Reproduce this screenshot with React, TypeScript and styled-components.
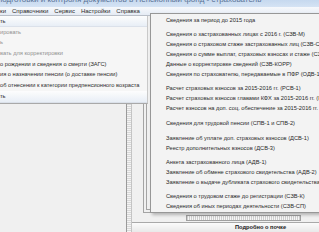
import * as React from "react"
import styled, { createGlobalStyle } from "styled-components"

const GlobalStyle = createGlobalStyle`
    html, body {
        margin: 0;
        padding: 0;
        background: #f0f0f0;
    }
    body {
        font-family: "Liberation Sans", "DejaVu Sans", sans-serif;
    }
`

const Screen = styled.div`
    position: relative;
    width: 319px;
    height: 232px;
    overflow: hidden;
    background: #f0f0f0;
    font-size: 5.7px;
    color: #2a2a2a;
    display: flex;
    flex-direction: column;
`

const TitleBar = styled.div`
    height: 7px;
    flex: none;
    overflow: hidden;
    background: linear-gradient(#c6d9ef, #d5e3f4);
    white-space: nowrap;
`

const TitleText = styled.div`
    margin-top: -5px;
    margin-left: -2px;
    font-size: 8px;
    line-height: 10px;
    color: #5b7396;
`

const MenuBar = styled.div`
    height: 8px;
    flex: none;
    display: flex;
    align-items: center;
    background: linear-gradient(#f7f9fc, #e5ebf4);
    border-bottom: 1px solid #b9bfc8;
    font-size: 6px;
`

const MenuItem = styled.span`
    padding: 0 3px;
    line-height: 8px;
    color: #2b2b2b;
    &:first-child {
        padding-left: 0;
    }
`

const Body = styled.div`
    flex: 1;
    display: flex;
    flex-direction: column;
`

const Panel = styled.div`
    width: 148px;
    height: 88px;
    flex: none;
    background: #f6f6f6;
    border-bottom: 1px solid #a9a9a9;
    border-right: 1px solid #c9c9c9;
    box-sizing: border-box;
    display: flex;
    flex-direction: column;
`

const PanelHeader = styled.div<{ $h?: number }>`
    height: ${p => p.$h ?? 10}px;
    line-height: ${p => p.$h ?? 10}px;
    background: linear-gradient(#fdfdfd, #e8eef6);
    border-bottom: 1px solid #dbe1ea;
    white-space: nowrap;
    overflow: hidden;
`

const PanelRow = styled.div<{ $disabled?: boolean; $h?: number }>`
    height: ${p => p.$h ?? 11}px;
    line-height: ${p => p.$h ?? 11}px;
    color: ${p => (p.$disabled ? "#909090" : "#2c2c2c")};
    white-space: nowrap;
    overflow: hidden;
`

const Lower = styled.div`
    flex: 1;
    display: flex;
`

const Blank = styled.div`
    width: 126px;
    flex: none;
`

const Splitter = styled.div`
    width: 4px;
    flex: none;
    border-left: 1px solid #9a9a9a;
    border-right: 1px solid #c4c4c4;
    background: repeating-linear-gradient(#d8d8d8 0 1px, #f4f4f4 1px 2px);
`

const RightPane = styled.div`
    flex: 1;
    display: flex;
    flex-direction: column;
`

const Frame = styled.div`
    flex: 1;
    margin-left: 11px;
    border-left: 4px double #a4a4a4;
    border-bottom: 4px double #a4a4a4;
`

const ScrollRow = styled.div`
    height: 9px;
    flex: none;
    display: flex;
    align-items: center;
    padding-left: 54px;
`

const ScrollTrack = styled.div`
    width: 113px;
    height: 4px;
    border: 1px solid #a0a0a0;
    background: repeating-linear-gradient(90deg, #cfcfcf 0 1px, #f7f7f7 1px 2px);
`

const DetailHeader = styled.div`
    height: 9px;
    flex: none;
    border-top: 1px solid #a9a9a9;
    background: linear-gradient(#fbfbfb, #e9e9e9);
    text-align: center;
    font-weight: bold;
    line-height: 9px;
    padding-left: 70px;
    color: #1a1a1a;
`

const Popup = styled.div`
    position: absolute;
    left: 150px;
    top: 13px;
    width: 190px;
    padding: 1px 0;
    background: #f3f3f3;
    border: 1px solid #979797;
    box-shadow: 2px 2px 3px rgba(0, 0, 0, 0.25);
    display: flex;
    flex-direction: column;
`

const PopupItem = styled.div`
    height: 10px;
    line-height: 10px;
    padding-left: 15px;
    white-space: nowrap;
    color: #2a2a2a;
`

const PopupSeparator = styled.div<{ $h?: number }>`
    height: ${p => p.$h ?? 4}px;
`

type Entry = { text: string } | { sep: number }

const popupEntries: Entry[] = [
    { text: "Сведения за период до 2015 года" },
    { sep: 4 },
    { text: "Сведения о застрахованных лицах с 2016 г. (СЗВ-М)" },
    { text: "Сведения о страховом стаже застрахованных лиц (СЗВ-СТАЖ)" },
    { text: "Сведения о сумме выплат, страховых взносах и стаже (СЗВ-6-4)" },
    { text: "Данные о корректировке сведений (СЗВ-КОРР)" },
    { text: "Сведения по страхователю, передаваемые в ПФР (ОДВ-1)" },
    { sep: 4 },
    { text: "Расчет страховых взносов за 2015-2016 гг. (РСВ-1)" },
    { text: "Расчет страховых взносов главами КФХ за 2015-2016 гг. (РСВ-2)" },
    { text: "Расчет взносов на доп. соц. обеспечение за 2015-2016 гг. (РСВ-3)" },
    { sep: 5 },
    { text: "Сведения для трудовой пенсии (СПВ-1 и СПВ-2)" },
    { sep: 5 },
    { text: "Заявление об уплате доп. страховых взносов (ДСВ-1)" },
    { text: "Реестр дополнительных взносов (ДСВ-3)" },
    { sep: 4 },
    { text: "Анкета застрахованного лица (АДВ-1)" },
    { text: "Заявление об обмене страхового свидетельства (АДВ-2)" },
    { text: "Заявление о выдаче дубликата страхового свидетельства (АДВ-3)" },
    { sep: 4 },
    { text: "Сведения о трудовом стаже до регистрации (СЗВ-К)" },
    { text: "Сведения об иных периодах деятельности (СЗВ-СП)" },
]

export default function App() {
    return (
        <>
            <GlobalStyle />
            <Screen>
                <TitleBar>
                    <TitleText>подготовки и контроля документов в Пенсионный фонд - страхователь</TitleText>
                </TitleBar>
                <MenuBar>
                    <MenuItem>ки</MenuItem>
                    <MenuItem>Справочники</MenuItem>
                    <MenuItem>Сервис</MenuItem>
                    <MenuItem>Настройки</MenuItem>
                    <MenuItem>Справка</MenuItem>
                </MenuBar>
                <Body>
                    <Panel>
                        <PanelHeader>ть</PanelHeader>
                        <PanelRow $disabled $h={10}>ировать</PanelRow>
                        <PanelRow $disabled $h={10}>ь</PanelRow>
                        <PanelRow $disabled $h={12}>вать для корректировки</PanelRow>
                        <PanelRow>о рождении и сведения о смерти (ЗАГС)</PanelRow>
                        <PanelRow>ия о назначении пенсии (о доставке пенсии)</PanelRow>
                        <PanelRow>об отнесении к категории предпенсионного возраста</PanelRow>
                        <PanelHeader $h={11}>ть</PanelHeader>
                    </Panel>
                    <Lower>
                        <Blank />
                        <Splitter />
                        <RightPane>
                            <Frame />
                            <ScrollRow>
                                <ScrollTrack />
                            </ScrollRow>
                            <DetailHeader>Подробно о почке</DetailHeader>
                        </RightPane>
                    </Lower>
                </Body>
                <Popup>
                    {popupEntries.map((e, i) =>
                        "sep" in e ? <PopupSeparator key={i} $h={e.sep} /> : <PopupItem key={i}>{e.text}</PopupItem>
                    )}
                </Popup>
            </Screen>
        </>
    )
}
